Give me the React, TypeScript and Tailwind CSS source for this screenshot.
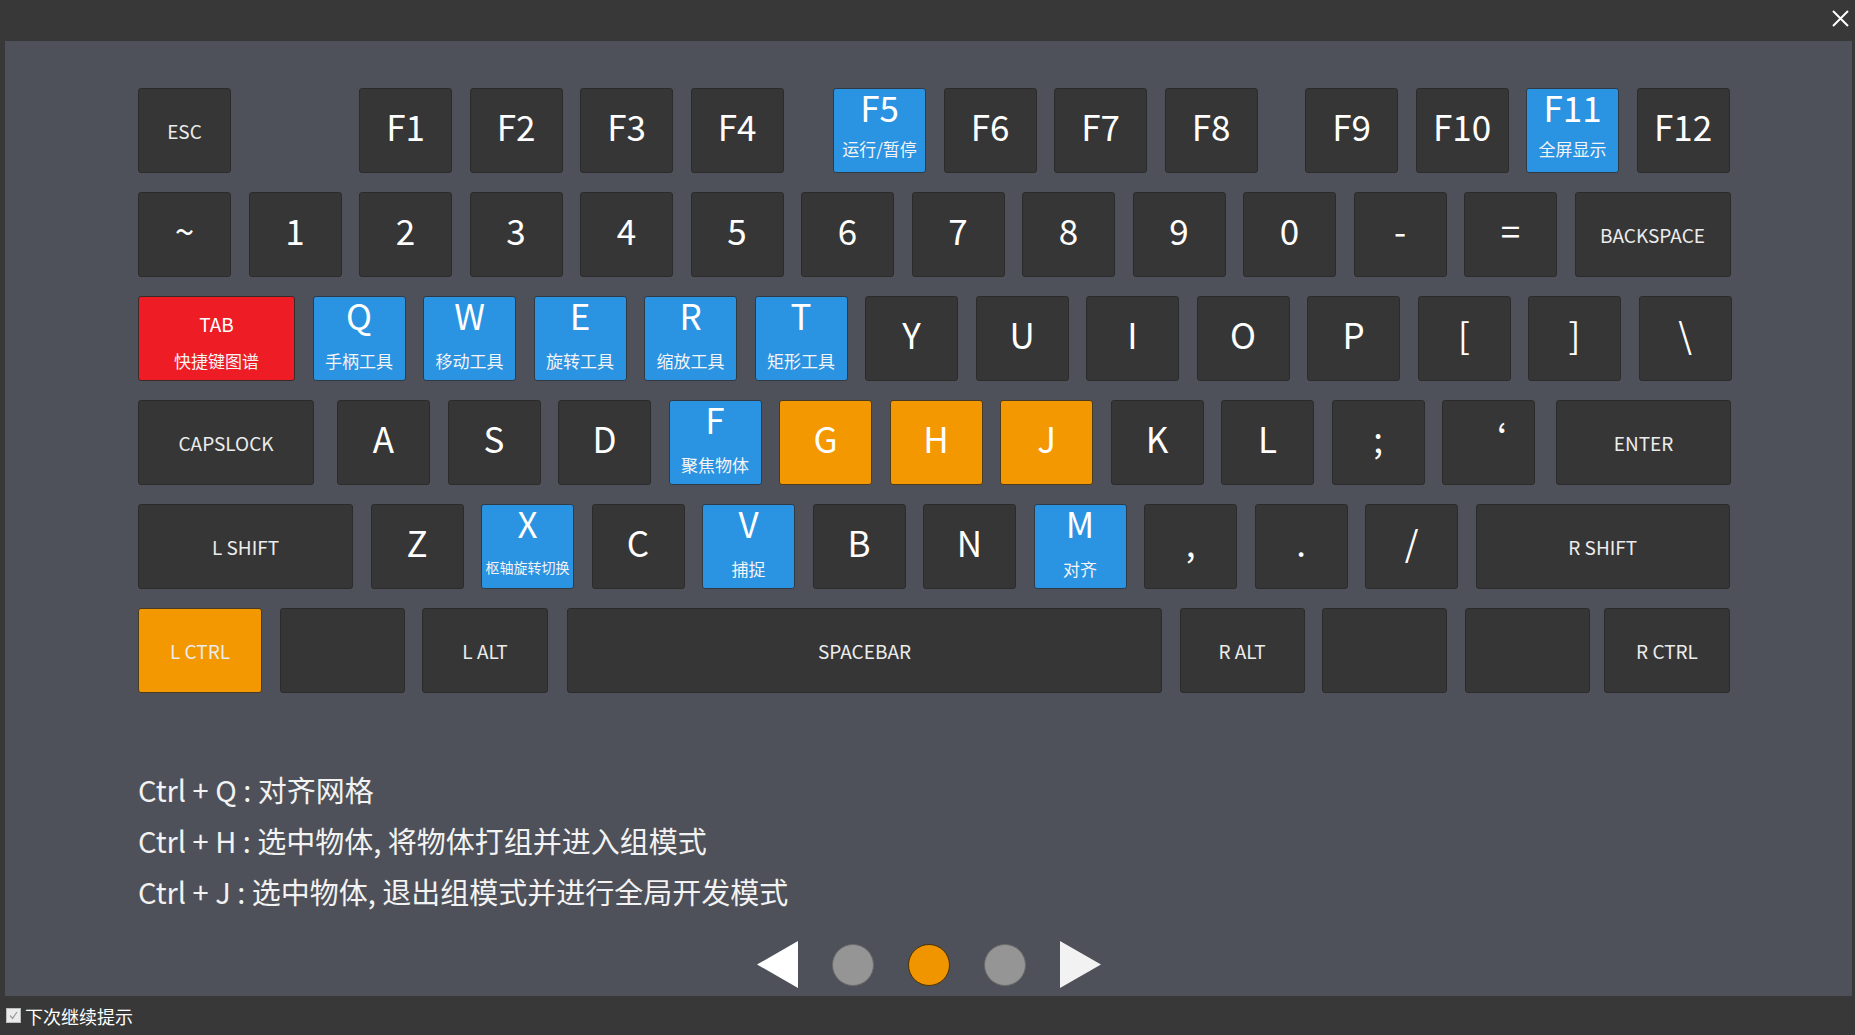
import React from "react";

type KeyDef = {
  label?: string;
  sub?: string;
  w?: string;
  color?: "dark" | "blue" | "red" | "orange";
  small?: boolean;
  extra?: string;
  subSize?: string;
  subMt?: string;
};

const colorCls: Record<string, string> = {
  dark: "bg-[#363636] border-[#2b2b2b]",
  blue: "bg-[#2a93e2] border-[#2f3a45]",
  red: "bg-[#ee1c25] border-[#3a2a2a]",
  orange: "bg-[#f39800] border-[#4a3a20]",
};

function Key({
  label,
  sub,
  w = "w-[93px]",
  color = "dark",
  small,
  extra = "",
  subSize = "text-[17px]",
  subMt = "mt-[20px]",
}: KeyDef) {
  const base = `${w} ${extra} h-[85px] shrink-0 rounded-[3px] border ${colorCls[color]} flex flex-col items-center text-white`;
  if (sub) {
    if (small) {
      return (
        <div className={base}>
          <div className="mt-[17px] text-[19px] leading-none">{label}</div>
          <div className="mt-[19px] text-[17px] leading-none text-[#f4f4f4]">{sub}</div>
        </div>
      );
    }
    return (
      <div className={base}>
        <div className="mt-[0px] text-[35px] leading-none">{label}</div>
        <div className={`${subMt} ${subSize} leading-none text-[#f4f4f4] whitespace-nowrap`}>{sub}</div>
      </div>
    );
  }
  if (small) {
    return (
      <div className={`${base} justify-center`}>
        <div className="text-[19px] leading-none text-[#ececec]">{label}</div>
      </div>
    );
  }
  return (
    <div className={`${base} justify-center pb-[10px]`}>
      <div className="text-[35px] leading-none">{label}</div>
    </div>
  );
}

function Row({ keys }: { keys: KeyDef[] }) {
  return (
    <div className="flex gap-[17.5px]">
      {keys.map((k, i) => (
        <Key key={i} {...k} />
      ))}
    </div>
  );
}

export default function App() {
  const row2: KeyDef[] = [
    { label: "~" },
    { label: "1" },
    { label: "2" },
    { label: "3" },
    { label: "4" },
    { label: "5" },
    { label: "6" },
    { label: "7" },
    { label: "8" },
    { label: "9" },
    { label: "0" },
    { label: "-" },
    { label: "=" },
    { label: "BACKSPACE", small: true, w: "w-[156px]" },
  ];
  const row3: KeyDef[] = [
    { label: "TAB", sub: "快捷键图谱", small: true, w: "w-[157px]", color: "red" },
    { label: "Q", sub: "手柄工具", color: "blue" },
    { label: "W", sub: "移动工具", color: "blue" },
    { label: "E", sub: "旋转工具", color: "blue" },
    { label: "R", sub: "缩放工具", color: "blue" },
    { label: "T", sub: "矩形工具", color: "blue" },
    { label: "Y" },
    { label: "U" },
    { label: "I" },
    { label: "O" },
    { label: "P" },
    { label: "[" },
    { label: "]" },
    { label: "\\" },
  ];
  const row4: KeyDef[] = [
    { label: "CAPSLOCK", small: true, w: "w-[176px]" },
    { label: "A", extra: "ml-[5.5px]" },
    { label: "S" },
    { label: "D" },
    { label: "F", sub: "聚焦物体", color: "blue" },
    { label: "G", color: "orange" },
    { label: "H", color: "orange" },
    { label: "J", color: "orange" },
    { label: "K" },
    { label: "L" },
    { label: ";" },
    { label: "‘" },
    { label: "ENTER", small: true, w: "w-[175px]", extra: "ml-[3.5px]" },
  ];
  const row5: KeyDef[] = [
    { label: "L SHIFT", small: true, w: "w-[215px]" },
    { label: "Z" },
    { label: "X", sub: "枢轴旋转切换", color: "blue", subSize: "text-[14px]" },
    { label: "C" },
    { label: "V", sub: "捕捉", color: "blue" },
    { label: "B" },
    { label: "N" },
    { label: "M", sub: "对齐", color: "blue" },
    { label: "," },
    { label: "." },
    { label: "/" },
    { label: "R SHIFT", small: true, w: "w-[254.5px]" },
  ];
  const row6: KeyDef[] = [
    { label: "L CTRL", small: true, w: "w-[124px]", color: "orange" },
    { label: "", small: true, w: "w-[125px]" },
    { label: "L ALT", small: true, w: "w-[126px]" },
    { label: "SPACEBAR", small: true, w: "w-[595px]", extra: "ml-[1.5px]" },
    { label: "R ALT", small: true, w: "w-[125px]" },
    { label: "", small: true, w: "w-[125px]" },
    { label: "", small: true, w: "w-[125px]" },
    { label: "R CTRL", small: true, w: "w-[126px]", extra: "-ml-[3px]" },
  ];

  return (
    <div className="w-[1855px] h-[1035px] bg-[#383838] flex flex-col overflow-hidden font-['Noto_Sans_CJK_SC','Noto_Sans',sans-serif]">
      {/* top bar */}
      <div className="h-[41px] shrink-0 flex justify-end items-start pt-[10px] pr-[6px]">
        <svg width="17" height="17" viewBox="0 0 17 17">
          <path d="M1 1 L16 16 M16 1 L1 16" stroke="#ffffff" strokeWidth="2" />
        </svg>
      </div>

      {/* main panel */}
      <div className="ml-[5px] mr-[3px] h-[955px] shrink-0 bg-[#4e5159] flex flex-col">
        <div className="pl-[133px] pt-[47px] flex flex-col gap-[19px]">
          {/* row 1 */}
          <div className="flex">
            <Key label="ESC" small />
            <div className="ml-[128px] flex gap-[17.5px]">
              <Key label="F1" />
              <Key label="F2" />
              <Key label="F3" />
              <Key label="F4" />
            </div>
            <div className="ml-[49.5px] flex gap-[17.5px]">
              <Key label="F5" sub="运行/暂停" color="blue" subMt="mt-[16px]" />
              <Key label="F6" />
              <Key label="F7" />
              <Key label="F8" />
            </div>
            <div className="ml-[47.5px] flex gap-[17.5px]">
              <Key label="F9" />
              <Key label="F10" />
              <Key label="F11" sub="全屏显示" color="blue" subMt="mt-[16px]" />
              <Key label="F12" />
            </div>
          </div>
          <Row keys={row2} />
          <Row keys={row3} />
          <Row keys={row4} />
          <Row keys={row5} />
          <Row keys={row6} />
        </div>

        {/* shortcut descriptions */}
        <div className="pl-[133px] mt-[71px] flex flex-col text-[29px] leading-[51px] text-[#f2f2f2]">
          <div>Ctrl + Q : 对齐网格</div>
          <div>Ctrl + H : 选中物体, 将物体打组并进入组模式</div>
          <div>Ctrl + J : 选中物体, 退出组模式并进行全局开发模式</div>
        </div>

        {/* pager */}
        <div className="mt-[24px] flex justify-center items-center gap-[34px]">
          <svg width="41" height="47" viewBox="0 0 41 47">
            <polygon points="41,0 41,47 0,23.5" fill="#ffffff" />
          </svg>
          <div className="w-[42px] h-[42px] rounded-full bg-[#959595] border border-[#6a6a6a]" />
          <div className="w-[42px] h-[42px] rounded-full bg-[#f09500] border border-[#4a3200]" />
          <div className="w-[42px] h-[42px] rounded-full bg-[#959595] border border-[#6a6a6a]" />
          <svg width="41" height="47" viewBox="0 0 41 47">
            <polygon points="0,0 41,23.5 0,47" fill="#f2f2f2" />
          </svg>
        </div>
      </div>

      {/* bottom bar */}
      <div className="flex-1 flex items-center pl-[6px] gap-[4px]">
        <div className="w-[15px] h-[15px] bg-[#ebebeb] border border-[#bdbdbd] flex items-center justify-center">
          <svg width="11" height="11" viewBox="0 0 11 11">
            <path d="M2 5.5 L4.5 8.5 L9 2" stroke="#9a9a9a" strokeWidth="1.2" fill="none" />
          </svg>
        </div>
        <span className="text-[18px] leading-none text-white">下次继续提示</span>
      </div>
    </div>
  );
}
